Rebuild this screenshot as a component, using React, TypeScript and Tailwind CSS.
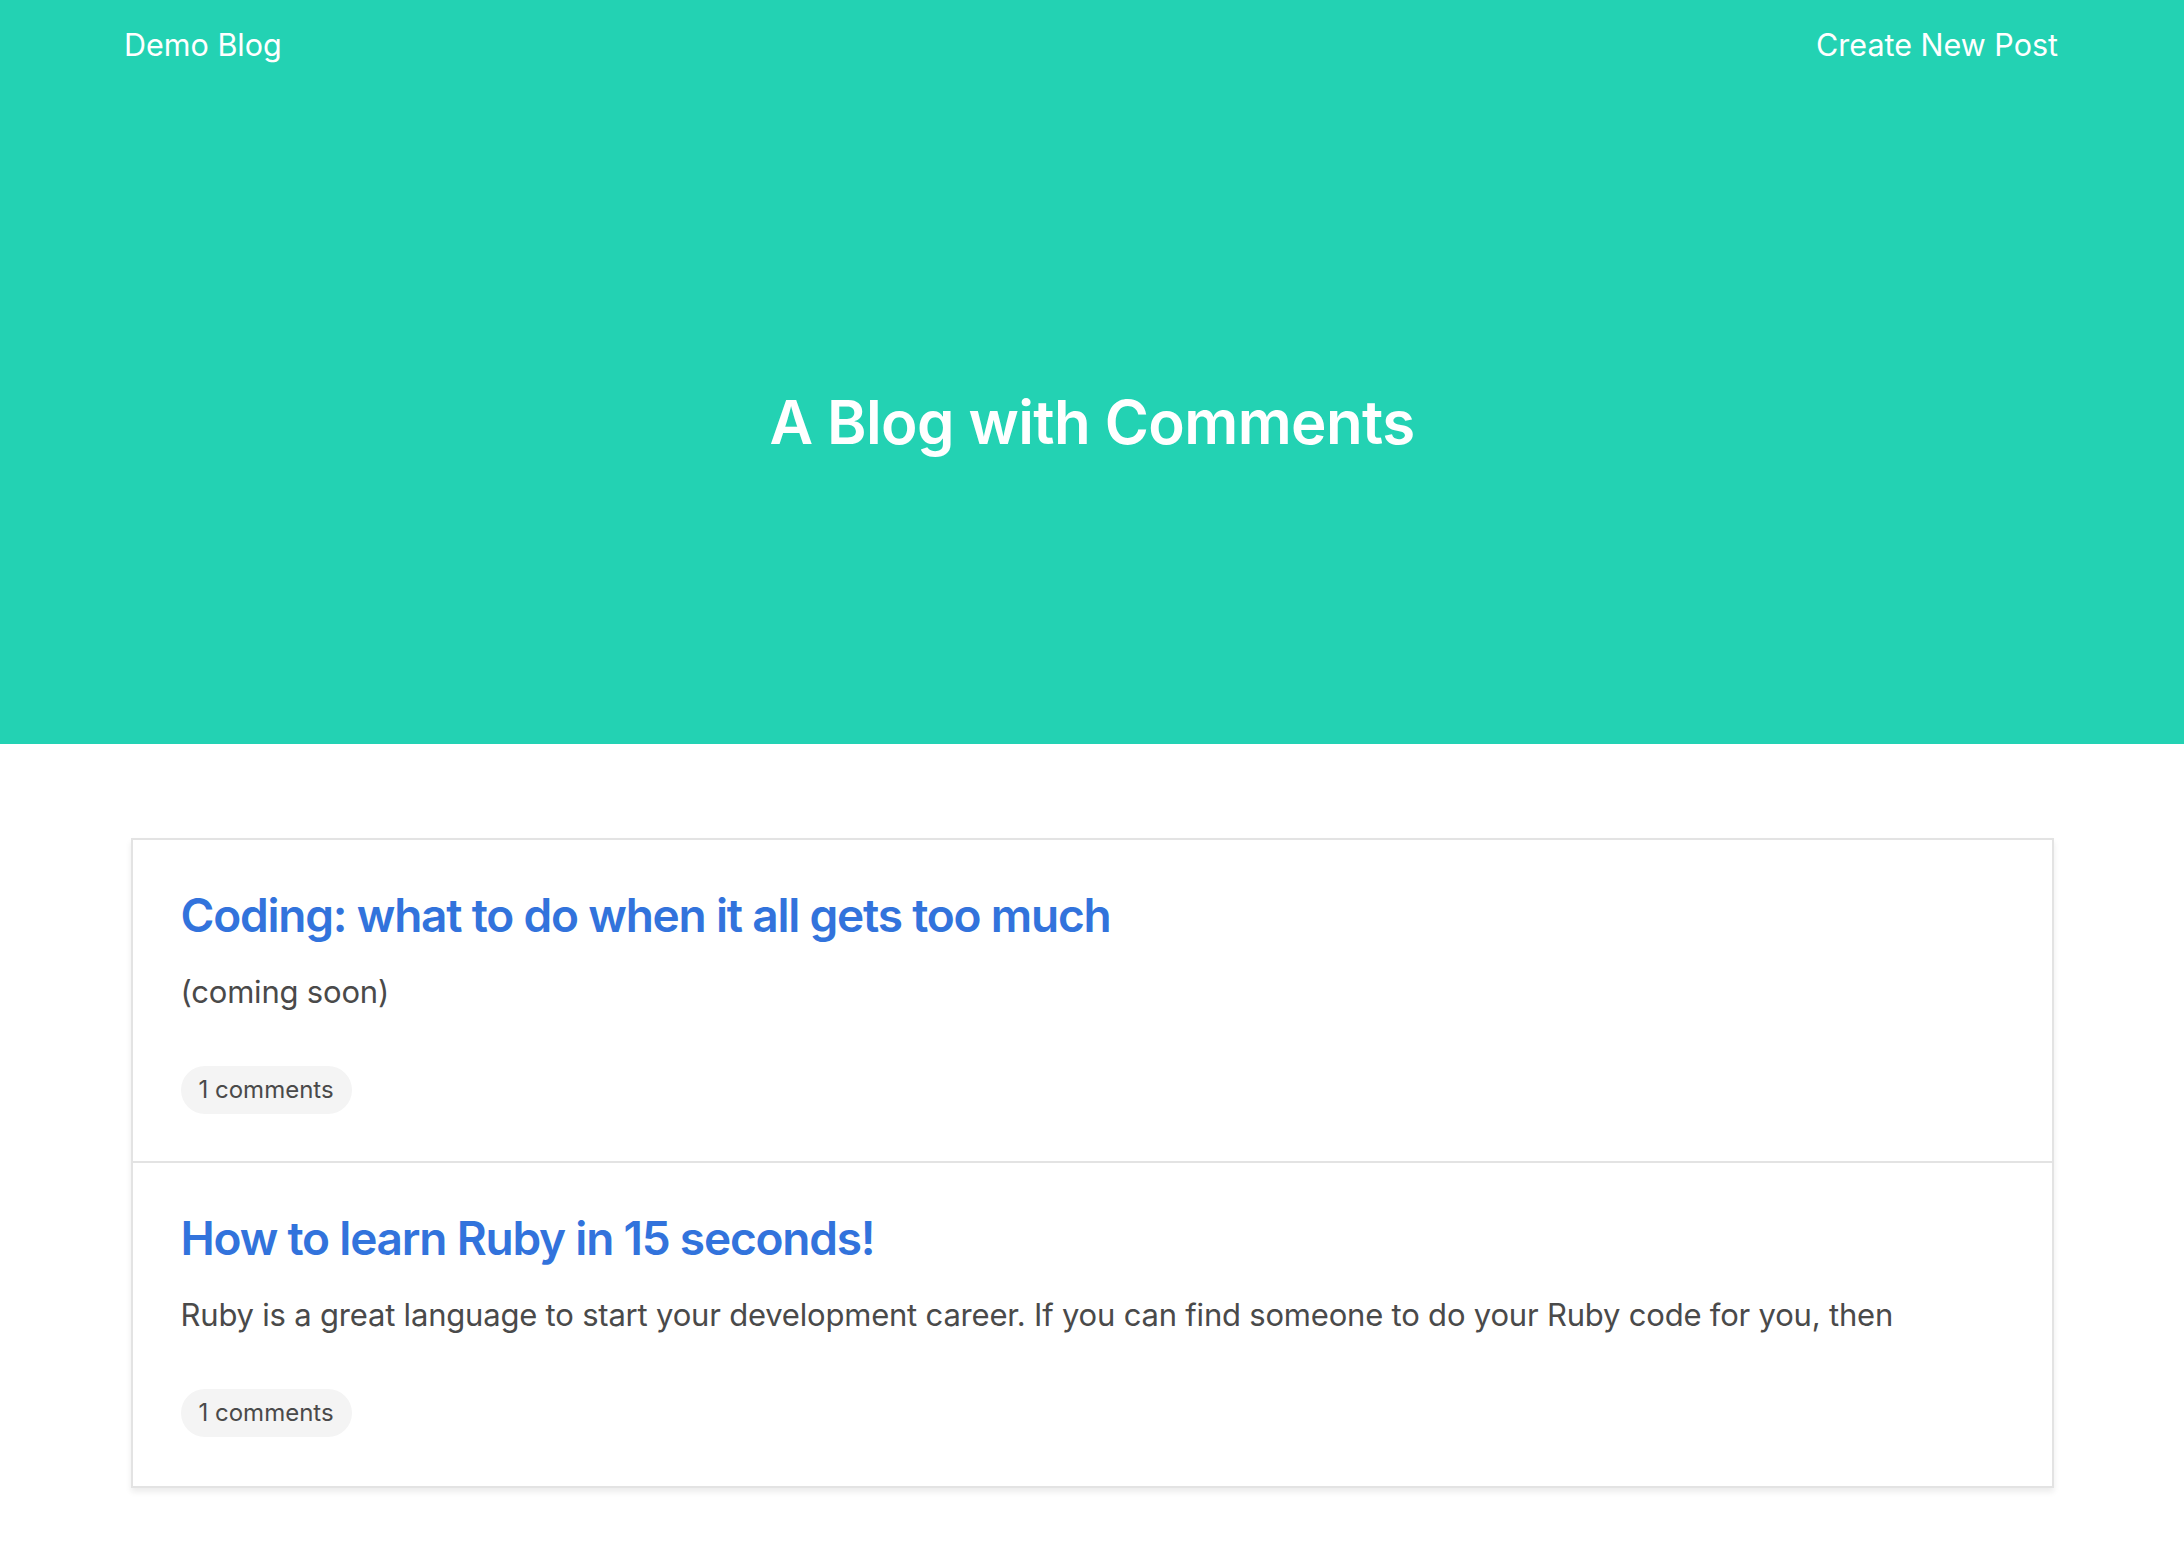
const posts = [
  {
    title: "Coding: what to do when it all gets too much",
    body: "(coming soon)",
    comments: 1,
  },
  {
    title: "How to learn Ruby in 15 seconds!",
    body: "Ruby is a great language to start your development career. If you can find someone to do your Ruby code for you, then",
    comments: 1,
  },
];

function PostItem({ title, body, comments, last }: { title: string; body: string; comments: number; last: boolean }) {
  return (
    <div className={`px-[48px] pt-[48px] ${last ? "pb-[49px]" : "pb-[47px] border-b-2 border-[#e3e3e3]"}`}>
      <a href="#" className="block text-[46px] leading-[54px] font-semibold text-[#3273dc] tracking-[-1.2px]">
        {title}
      </a>
      <p className="mt-[26px] text-[31px] leading-[48px] text-[#4a4a4a] tracking-[-0.2px]">{body}</p>
      <div className="mt-[50px] flex">
        <span className="inline-flex h-[48px] items-center rounded-full bg-[#f4f4f4] px-[18px] text-[24px] text-[#4a4a4a]">
          {comments} comments
        </span>
      </div>
    </div>
  );
}

export default function App() {
  return (
    <div className="min-h-screen bg-white font-['Inter',_'Liberation_Sans',_sans-serif]">
      <header className="flex h-[744px] flex-col bg-[#23d2b3] text-white">
        <nav className="flex h-[90px] items-center justify-between pl-[124px] pr-[126px] text-[30.5px]">
          <a href="#">Demo Blog</a>
          <a href="#">Create New Post</a>
        </nav>
        <div className="flex flex-1 items-center justify-center pt-[10px]">
          <h1 className="text-[60px] font-semibold tracking-[-0.6px]">A Blog with Comments</h1>
        </div>
      </header>
      <main className="pt-[94px] pb-[68px]">
        <div className="mx-auto w-[1923px] border-2 border-[#e3e3e3] bg-white shadow-[0_4px_6px_rgba(0,0,0,0.08)]">
          {posts.map((p, i) => (
            <PostItem key={i} {...p} last={i === posts.length - 1} />
          ))}
        </div>
      </main>
    </div>
  );
}
